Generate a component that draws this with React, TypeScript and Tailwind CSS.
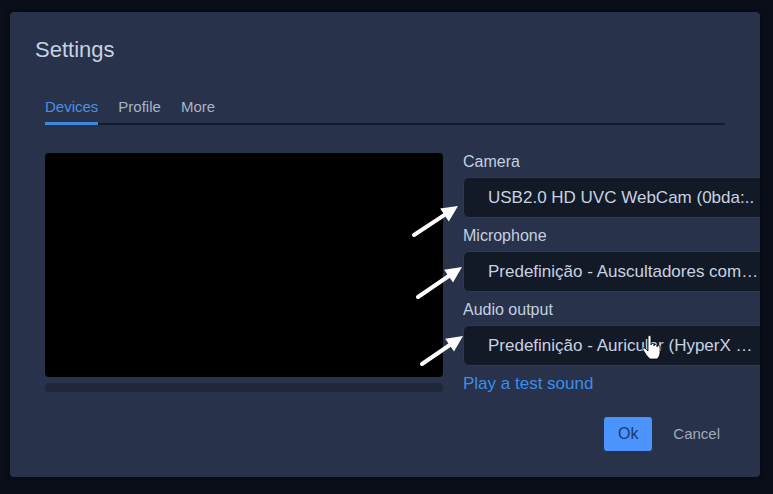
import { useState } from "react";

const devices = [
  { label: "Camera", value: "USB2.0 HD UVC WebCam (0bda:.." },
  { label: "Microphone", value: "Predefinição - Auscultadores com…" },
  { label: "Audio output", value: "Predefinição - Auricular (HyperX …" },
];

const tabs = ["Devices", "Profile", "More"];

function Arrow({ x1, y1, x2, y2 }: { x1: number; y1: number; x2: number; y2: number }) {
  const a = Math.atan2(y2 - y1, x2 - x1);
  const len = 18;
  const w = 0.45;
  const p1 = `${x2 - len * Math.cos(a - w)},${y2 - len * Math.sin(a - w)}`;
  const p2 = `${x2 - len * Math.cos(a + w)},${y2 - len * Math.sin(a + w)}`;
  const bx = x2 - 12 * Math.cos(a);
  const by = y2 - 12 * Math.sin(a);
  return (
    <g>
      <line x1={x1} y1={y1} x2={bx} y2={by} stroke="white" strokeWidth="4" strokeLinecap="round" />
      <polygon points={`${x2},${y2} ${p1} ${p2}`} fill="white" />
    </g>
  );
}

export default function App() {
  const [tab, setTab] = useState("Devices");

  return (
    <div className="relative w-[773px] h-[494px] bg-[#0a0e19] pt-[12px] pl-[10px] font-['Liberation_Sans',Arial,sans-serif]">
      <div className="w-[750px] h-[465px] rounded-[4px] bg-[#28324a] overflow-hidden pt-[25px] px-[25px] shadow-[0_0_6px_rgba(0,0,0,0.5)]">
        <h1 className="text-[22px] leading-[26px] text-[#c6d1e4]">Settings</h1>

        <div className="mt-[35px] ml-[10px] w-[680px] flex gap-[20px] border-b-2 border-[#141b2a]">
          {tabs.map((t) => (
            <button
              key={t}
              onClick={() => setTab(t)}
              className={
                t === tab
                  ? "text-[15px] leading-[18px] pb-[6px] -mb-[2px] border-b-[3px] border-[#3f86e0] text-[#4a90e6]"
                  : "text-[15px] leading-[18px] pb-[6px] -mb-[2px] border-b-[3px] border-transparent text-[#aab4c7]"
              }
            >
              {t}
            </button>
          ))}
        </div>

        <div className="mt-[27px] ml-[10px] flex gap-[20px]">
          <div className="w-[398px] shrink-0 pt-[1px]">
            <div className="h-[224px] rounded-[4px] bg-black"></div>
            <div className="mt-[6px] h-[9px] rounded-[4px] bg-[#1f2739]"></div>
          </div>

          <div className="w-[320px] shrink-0">
            {devices.map((d, i) => (
              <div key={d.label} className={i === 0 ? "" : "mt-[8px]"}>
                <div className="text-[16px] leading-[19px] text-[#c5cfe0]">{d.label}</div>
                <div className="mt-[6px] h-[41px] rounded-[6px] bg-[#121a28] border border-[#2f394e] pl-[24px] flex items-center">
                  <span className="whitespace-nowrap text-[17px] text-[#c9d1e0]">{d.value}</span>
                </div>
              </div>
            ))}
            <div className="mt-[8px] text-[17px] leading-[20px] text-[#3c8de8]">Play a test sound</div>
          </div>
        </div>

        <div className="mt-[23px] flex justify-end items-center pr-[15px]">
          <button className="h-[34px] w-[48px] rounded-[3px] bg-[#4b94fd] text-[16px] text-[#1d3a6a]">Ok</button>
          <button className="ml-[21px] text-[15px] text-[#9ea9bc]">Cancel</button>
        </div>
      </div>

      <svg className="absolute inset-0 pointer-events-none" width="773" height="494">
        <Arrow x1={414} y1={235} x2={458} y2={206} />
        <Arrow x1={418} y1={297} x2={462} y2={267} />
        <Arrow x1={422} y1={364} x2={463} y2={336} />
        <path
          d="M648 337 c0-2 3-2 3 0 v8 c0-2 3-2 3 0 v1 c0-2 3-2 3 0 v1 c0-2 3-2 3 0 v6 c0 3-2 5-3 6 h-7 c-1-1-4-4-5-6 l-2-3 c-1-2 1-3 3-1 l2 2 z"
          fill="white"
          stroke="black"
          strokeWidth="0.8"
        />
      </svg>
    </div>
  );
}
